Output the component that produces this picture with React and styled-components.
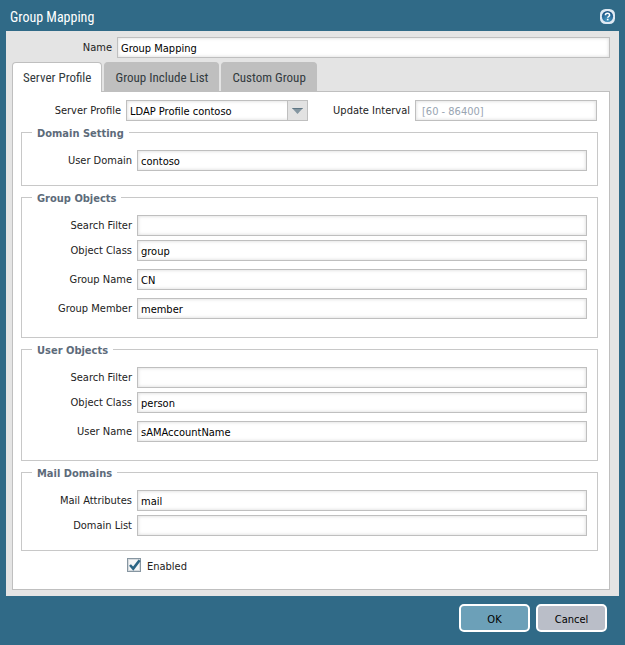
import React, { useState } from "react";
import styled, { createGlobalStyle } from "styled-components";

const Colors = {
  frame: "#306a87",
  body: "#e4e4e4",
  border: "#bfbfbf",
  line: "#c8c8c8",
  tab: "#bfbfbf",
  text: "#222222",
  legend: "#5d6b7a",
};

const textFont = `"DejaVu Sans Condensed", "DejaVu Sans", sans-serif`;
const headingFont = `"Roboto Condensed", Roboto, sans-serif`;

const tabs = ["Server Profile", "Group Include List", "Custom Group"];

const sections = [
  {
    title: "Domain Setting",
    fields: [{ id: "userDomain", label: "User Domain", value: "contoso" }],
  },
  {
    title: "Group Objects",
    fields: [
      { id: "groupFilter", label: "Search Filter", value: "" },
      { id: "groupClass", label: "Object Class", value: "group", spaced: true },
      { id: "groupName", label: "Group Name", value: "CN", spaced: true },
      { id: "groupMember", label: "Group Member", value: "member", spaced: true },
    ],
  },
  {
    title: "User Objects",
    fields: [
      { id: "userFilter", label: "Search Filter", value: "" },
      { id: "userClass", label: "Object Class", value: "person", spaced: true },
      { id: "userName", label: "User Name", value: "sAMAccountName", spaced: true },
    ],
  },
  {
    title: "Mail Domains",
    fields: [
      { id: "mailAttributes", label: "Mail Attributes", value: "mail" },
      { id: "domainList", label: "Domain List", value: "" },
    ],
  },
];

const App = () => {
  const [active, setActive] = useState(tabs[0]);

  return (
    <>
      <GlobalStyle />
      <Dialog>
        <TitleBar>
          <Title>Group Mapping</Title>
          <HelpButton type="button" aria-label="Help">
            <HelpIcon />
          </HelpButton>
        </TitleBar>
        <Body>
          <NameRow>
            <Label htmlFor="name">Name</Label>
            <Input id="name" defaultValue="Group Mapping" />
          </NameRow>
          <TabList role="tablist">
            {tabs.map((tab) => (
              <Tab
                key={tab}
                type="button"
                role="tab"
                aria-selected={tab === active}
                $active={tab === active}
                onClick={() => setActive(tab)}
              >
                {tab}
              </Tab>
            ))}
          </TabList>
          <Panel role="tabpanel">
            <ProfileRow>
              <Label htmlFor="profile">Server Profile</Label>
              <SelectBox>
                <Select id="profile">
                  <option>LDAP Profile contoso</option>
                </Select>
                <Trigger>
                  <svg width="11" height="6" viewBox="0 0 11 6">
                    <path d="M0 0h11L5.5 6z" fill="#8496a1" />
                    <path d="M0 0h11L10 1H1z" fill="#5f7684" />
                  </svg>
                </Trigger>
              </SelectBox>
              <Label htmlFor="interval">Update Interval</Label>
              <Input id="interval" placeholder="[60 - 86400]" />
            </ProfileRow>
            {sections.map((section) => (
              <Section key={section.title}>
                <Legend>{section.title}</Legend>
                {section.fields.map((field) => (
                  <FieldRow key={field.id} $spaced={field.spaced}>
                    <Label htmlFor={field.id}>{field.label}</Label>
                    <Input id={field.id} defaultValue={field.value} />
                  </FieldRow>
                ))}
              </Section>
            ))}
            <EnabledRow>
              <CheckBox>
                <Check type="checkbox" id="enabled" defaultChecked />
                <CheckMark viewBox="0 0 14 14">
                  <path d="M3 7l3.2 3.6L12.6 2.2" />
                </CheckMark>
              </CheckBox>
              <EnabledLabel htmlFor="enabled">Enabled</EnabledLabel>
            </EnabledRow>
          </Panel>
        </Body>
        <Footer>
          <Button type="button" $primary>
            OK
          </Button>
          <Button type="button">Cancel</Button>
        </Footer>
      </Dialog>
    </>
  );
};

const HelpIcon = () => (
  <svg width="15" height="15" viewBox="0 0 15 15">
    <defs>
      <radialGradient id="help" cx="50%" cy="80%" r="75%">
        <stop offset="0" stopColor="#4a9cc6" />
        <stop offset="1" stopColor="#1a5282" />
      </radialGradient>
    </defs>
    <rect width="15" height="15" rx="5.5" fill="#dfe9f3" />
    <circle cx="7.5" cy="7.5" r="5.6" fill="url(#help)" />
    <path
      d="M5.4 6.2c0-2.5 4.2-2.5 4.2 0 0 1.3-1.9 1.3-1.9 2.6"
      fill="none"
      stroke="#fff"
      strokeWidth="1.5"
    />
    <rect x="6.9" y="9.8" width="1.6" height="1.5" fill="#fff" />
  </svg>
);

const GlobalStyle = createGlobalStyle`
  * {
    box-sizing: border-box;
  }
  body {
    margin: 0;
    background: ${Colors.frame};
    color: ${Colors.text};
    font-family: ${textFont};
    font-size: 11px;
  }
  button, input, select {
    margin: 0;
    font-family: inherit;
    font-size: inherit;
  }
`;

const Dialog = styled.div`
  padding: 0 6px;
`;
const TitleBar = styled.header`
  display: flex;
  align-items: center;
  justify-content: space-between;
  height: 31px;
  padding: 2px 4px 0;
`;
const Title = styled.h1`
  margin: 0;
  color: #ffffff;
  font-family: ${headingFont};
  font-size: 14px;
  font-weight: 400;
`;
const HelpButton = styled.button`
  display: flex;
  padding: 0;
  border: 0;
  background: none;
`;
const Body = styled.main`
  padding: 6px 9px 6px 6px;
  background: ${Colors.body};
`;
const NameRow = styled.div`
  display: grid;
  grid-template-columns: 105px 1fr;
`;
const Label = styled.label`
  padding-right: 5px;
  line-height: 22px;
  height: 21px;
  text-align: right;
  white-space: nowrap;
`;
const Input = styled.input`
  width: 100%;
  min-width: 0;
  height: 21px;
  padding: 2px 3px 0;
  border: 1px solid ${Colors.border};
  border-radius: 0;
  background: #ffffff;
  box-shadow: inset 0 0 3px 1px #e6e6e6;
  color: #000000;

  &::placeholder {
    padding-left: 3px;
    color: #99a5b2;
    opacity: 1;
  }
`;
const TabList = styled.div`
  display: flex;
  gap: 2px;
  margin-top: 4px;
`;
const Tab = styled.button`
  position: relative;
  height: ${(props) => (props.$active ? "30px" : "29px")};
  margin-bottom: ${(props) => (props.$active ? "-1px" : "0")};
  padding: 0 10px;
  border: 1px solid ${Colors.tab};
  border-bottom: 0;
  border-radius: 4px 4px 0 0;
  background: ${(props) => (props.$active ? "#ffffff" : Colors.tab)};
  color: #333b40;
  font-family: ${headingFont};
  font-size: 13px;
`;
const Panel = styled.section`
  padding: 8px 11px 13px 8px;
  border: 1px solid ${Colors.border};
  background: #ffffff;
`;
const ProfileRow = styled.div`
  display: grid;
  grid-template-columns: 105px 1fr 107px 1fr;
  margin: 0 1px 5px 0;
`;
const SelectBox = styled.div`
  position: relative;
  min-width: 0;
`;
const Select = styled.select`
  appearance: none;
  display: block;
  width: 100%;
  height: 21px;
  padding: 2px 24px 0 3px;
  border: 1px solid ${Colors.border};
  border-radius: 0;
  background: #ffffff;
  box-shadow: inset 0 0 3px 1px #e6e6e6;
  color: #000000;
`;
const Trigger = styled.span`
  position: absolute;
  top: 0;
  right: 0;
  display: flex;
  align-items: center;
  justify-content: center;
  width: 21px;
  height: 21px;
  border: 1px solid ${Colors.border};
  background: #e2e2e2;
  pointer-events: none;
`;
const Section = styled.fieldset`
  min-width: 0;
  margin: 0 0 5px;
  padding: 11px 10px 10px;
  border: 1px solid ${Colors.line};
`;
const Legend = styled.legend`
  padding: 2px 5px 0;
  color: ${Colors.legend};
  font-weight: 700;
  line-height: 11px;
`;
const FieldRow = styled.div`
  display: grid;
  grid-template-columns: 105px 1fr;
  margin-bottom: ${(props) => (props.$spaced ? "8px" : "4px")};
`;
const EnabledRow = styled.div`
  display: flex;
  gap: 6px;
  margin-top: 7px;
  padding-left: 106px;
`;
const CheckBox = styled.span`
  display: grid;
  width: 14px;
  height: 14px;
`;
const Check = styled.input`
  grid-area: 1 / 1;
  appearance: none;
  width: 14px;
  height: 14px;
  border: 1px solid #8796a1;
  background: #f4f5f6;
  box-shadow: inset 0 0 0 1px #d5dade;
`;
const CheckMark = styled.svg`
  grid-area: 1 / 1;
  overflow: visible;
  fill: none;
  stroke: #2a6484;
  stroke-width: 2.6;
  pointer-events: none;

  ${Check}:not(:checked) + & {
    visibility: hidden;
  }
`;
const EnabledLabel = styled.label`
  line-height: 18px;
`;
const Footer = styled.footer`
  display: flex;
  justify-content: flex-end;
  gap: 6px;
  padding: 8px 12px 13px;
`;
const Button = styled.button`
  width: 71px;
  height: 28px;
  padding: 2px 0 0;
  border: 2px solid #ffffff;
  border-radius: 5px;
  background: ${(props) => (props.$primary ? "#6ca0b8" : "#babec8")};
  color: #000000;
`;

export default App;
